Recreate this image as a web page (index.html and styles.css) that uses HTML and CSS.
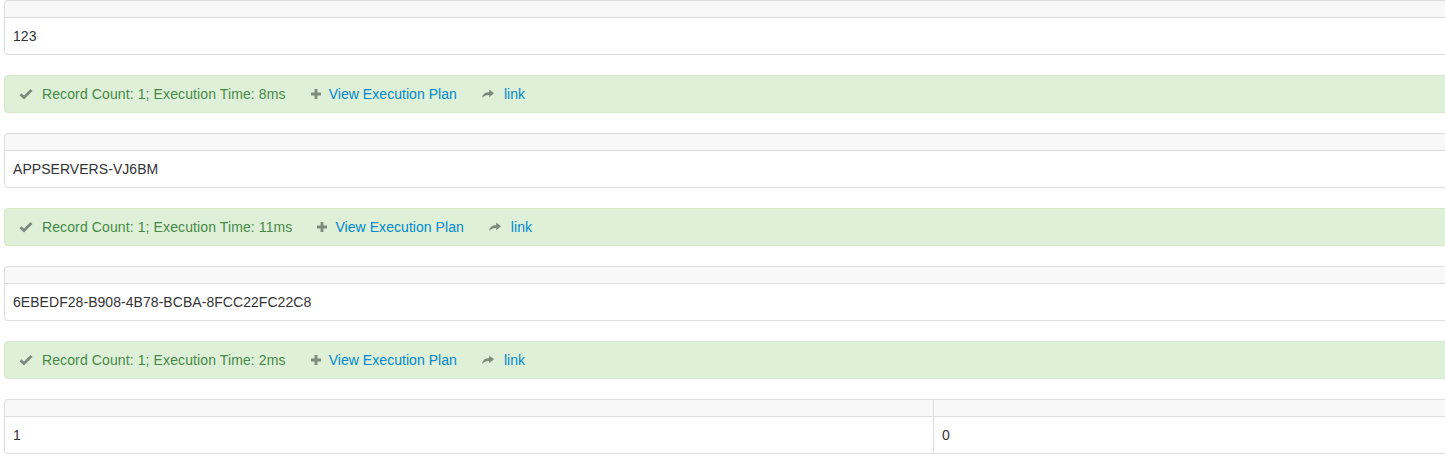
FILE: index.html
```html
<!DOCTYPE html>
<html>
<head>
<meta charset="utf-8">
<title>Results</title>
<link rel="stylesheet" href="styles.css">
</head>
<body>
<div class="results">
  <table class="grid">
    <thead><tr><th></th></tr></thead>
    <tbody><tr><td>123</td></tr></tbody>
  </table>
  <div class="alert">
    <svg class="ico ico-ok" viewBox="0 0 14 14"><polyline points="1.5,7.2 5,10.5 12.5,3" /></svg>
    <span class="msg">Record Count: 1; Execution Time: 8ms</span>
    <svg class="ico ico-plus" viewBox="0 0 14 14"><path d="M5.6 2h2.8v3.6H12v2.8H8.4V12H5.6V8.4H2V5.6h3.6z"/></svg>
    <a class="lnk plan" href="#">View Execution Plan</a>
    <svg class="ico ico-share" viewBox="0 0 14 14"><path d="M13 6.3 8.2 2.6v2.3C4.3 5 1.6 7 1 11c1.8-2 4-3 7.2-3v2.2z"/></svg>
    <a class="lnk" href="#">link</a>
  </div>

  <table class="grid">
    <thead><tr><th></th></tr></thead>
    <tbody><tr><td>APPSERVERS-VJ6BM</td></tr></tbody>
  </table>
  <div class="alert">
    <svg class="ico ico-ok" viewBox="0 0 14 14"><polyline points="1.5,7.2 5,10.5 12.5,3" /></svg>
    <span class="msg">Record Count: 1; Execution Time: 11ms</span>
    <svg class="ico ico-plus" viewBox="0 0 14 14"><path d="M5.6 2h2.8v3.6H12v2.8H8.4V12H5.6V8.4H2V5.6h3.6z"/></svg>
    <a class="lnk plan" href="#">View Execution Plan</a>
    <svg class="ico ico-share" viewBox="0 0 14 14"><path d="M13 6.3 8.2 2.6v2.3C4.3 5 1.6 7 1 11c1.8-2 4-3 7.2-3v2.2z"/></svg>
    <a class="lnk" href="#">link</a>
  </div>

  <table class="grid">
    <thead><tr><th></th></tr></thead>
    <tbody><tr><td>6EBEDF28-B908-4B78-BCBA-8FCC22FC22C8</td></tr></tbody>
  </table>
  <div class="alert">
    <svg class="ico ico-ok" viewBox="0 0 14 14"><polyline points="1.5,7.2 5,10.5 12.5,3" /></svg>
    <span class="msg">Record Count: 1; Execution Time: 2ms</span>
    <svg class="ico ico-plus" viewBox="0 0 14 14"><path d="M5.6 2h2.8v3.6H12v2.8H8.4V12H5.6V8.4H2V5.6h3.6z"/></svg>
    <a class="lnk plan" href="#">View Execution Plan</a>
    <svg class="ico ico-share" viewBox="0 0 14 14"><path d="M13 6.3 8.2 2.6v2.3C4.3 5 1.6 7 1 11c1.8-2 4-3 7.2-3v2.2z"/></svg>
    <a class="lnk" href="#">link</a>
  </div>

  <table class="grid two">
    <thead><tr><th></th><th></th></tr></thead>
    <tbody><tr><td>1</td><td>0</td></tr></tbody>
  </table>
</div>
</body>
</html>
```

FILE: styles.css
```css
html, body {
  margin: 0;
  padding: 0;
  overflow: hidden;
  background: #fff;
}
body {
  font-family: "Liberation Sans", Arial, Helvetica, sans-serif;
  font-size: 14px;
  line-height: 20px;
  color: #333;
  padding-left: 4px;
}
.results {
  width: 1859px;
}
.grid {
  width: 100%;
  table-layout: fixed;
  border-collapse: separate;
  border-spacing: 0;
  border: 1px solid #ddd;
  border-left: 0;
  border-radius: 4px;
  margin: 0 0 20px 0;
}
.grid th, .grid td {
  padding: 8px;
  line-height: 20px;
  text-align: left;
  vertical-align: top;
  border-left: 1px solid #ddd;
  font-weight: normal;
}
.grid th {
  background: #f8f8f8;
  border-top: 0;
}
.grid td {
  border-top: 1px solid #ddd;
  letter-spacing: 0.05px;
}
.grid thead tr:first-child th:first-child {
  border-top-left-radius: 4px;
}
.grid tbody tr:last-child td:first-child {
  border-bottom-left-radius: 4px;
}
.alert {
  display: flex;
  align-items: center;
  padding: 8px 35px 8px 14px;
  background: #dff0d8;
  border: 1px solid #d6e9c6;
  border-radius: 4px;
  color: #468847;
  margin-bottom: 20px;
  height: 20px;
}
.msg {
  letter-spacing: 0.11px;
}
.ico {
  width: 14px;
  height: 14px;
  flex: none;
}
.ico-ok {
  fill: none;
  stroke: #7e8a7c;
  stroke-width: 2.8;
  margin-right: 9px;
}
.ico-plus {
  fill: #7e8a7c;
  margin-left: 23px;
  margin-right: 6px;
}
.ico-share {
  fill: #7e8a7c;
  margin-left: 24px;
  margin-right: 9px;
}
.lnk {
  color: #0088cc;
  text-decoration: none;
  letter-spacing: 0.05px;
}
```
